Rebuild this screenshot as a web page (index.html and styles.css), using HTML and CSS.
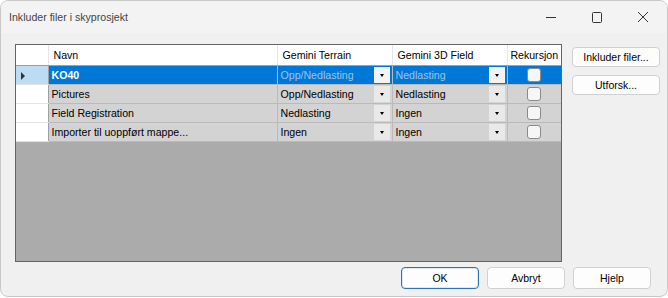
FILE: index.html
```html
<!DOCTYPE html>
<html lang="no">
<head>
    <meta charset="UTF-8">
    <title>Inkluder filer i skyprosjekt</title>
    <link rel="stylesheet" href="styles.css">
</head>
<body>
    <div class="window">
        <div class="titlebar">
            <div class="title">Inkluder filer i skyprosjekt</div>
            <div class="caption-buttons">
                <svg class="cap" width="46" height="32" viewBox="0 0 46 32"><path d="M18 16.5h10" stroke="#333" stroke-width="1"/></svg>
                <svg class="cap" width="46" height="32" viewBox="0 0 46 32"><rect x="18.5" y="11.5" width="9" height="10" rx="1" fill="none" stroke="#333" stroke-width="1"/></svg>
                <svg class="cap" width="46" height="32" viewBox="0 0 46 32"><path d="M18 11l10 10M28 11l-10 10" stroke="#333" stroke-width="1"/></svg>
            </div>
        </div>

        <div class="content">
            <div class="grid">
                <table class="rows">
                    <colgroup>
                        <col class="w-rh">
                        <col class="w-name">
                        <col class="w-combo">
                        <col class="w-combo">
                        <col class="w-rek">
                    </colgroup>
                    <tr class="head">
                        <td class="rh"></td>
                        <td>Navn</td>
                        <td>Gemini Terrain</td>
                        <td>Gemini 3D Field</td>
                        <td class="c-rek">Rekursjon</td>
                    </tr>
                    <tr class="selected">
                        <td class="rh"><span class="arrow"></span></td>
                        <td class="c-name"><b>KO40</b></td>
                        <td class="combo"><div class="cell"><span>Opp/Nedlasting</span><span class="drop"></span></div></td>
                        <td class="combo"><div class="cell"><span>Nedlasting</span><span class="drop"></span></div></td>
                        <td class="chk"><span class="box"></span></td>
                    </tr>
                    <tr>
                        <td class="rh"></td>
                        <td class="c-name">Pictures</td>
                        <td class="combo"><div class="cell"><span>Opp/Nedlasting</span><span class="drop"></span></div></td>
                        <td class="combo"><div class="cell"><span>Nedlasting</span><span class="drop"></span></div></td>
                        <td class="chk"><span class="box"></span></td>
                    </tr>
                    <tr>
                        <td class="rh"></td>
                        <td class="c-name">Field Registration</td>
                        <td class="combo"><div class="cell"><span>Nedlasting</span><span class="drop"></span></div></td>
                        <td class="combo"><div class="cell"><span>Ingen</span><span class="drop"></span></div></td>
                        <td class="chk"><span class="box"></span></td>
                    </tr>
                    <tr>
                        <td class="rh"></td>
                        <td class="c-name">Importer til uoppført mappe...</td>
                        <td class="combo"><div class="cell"><span>Ingen</span><span class="drop"></span></div></td>
                        <td class="combo"><div class="cell"><span>Ingen</span><span class="drop"></span></div></td>
                        <td class="chk"><span class="box"></span></td>
                    </tr>
                </table>
            </div>

            <div class="side">
                <button class="btn">Inkluder filer...</button>
                <button class="btn">Utforsk...</button>
            </div>
        </div>

        <div class="footer">
            <button class="btn wide default">OK</button>
            <button class="btn wide">Avbryt</button>
            <button class="btn wide">Hjelp</button>
        </div>
    </div>
</body>
</html>
```

FILE: styles.css
```css
body {
    margin: 0;
    background: #ffffff;
    font-family: "Liberation Sans", Arial, sans-serif;
    font-size: 12px;
    color: #000;
}
.window {
    width: 666px;
    height: 295px;
    border: 1px solid #c9c9c9;
    border-radius: 8px;
    background: #f0f0f0;
    display: flex;
    flex-direction: column;
    overflow: hidden;
}

.titlebar {
    height: 32px;
    display: flex;
    align-items: center;
    justify-content: space-between;
    background: #f3f3f3;
}
.title {
    padding-left: 8px;
    font-family: "Liberation Sans", Arial, sans-serif;
    font-size: 10.6px;
    color: #444;
}
.caption-buttons {
    display: flex;
    align-self: flex-start;
    margin-right: 1px;
}
.cap {
    display: block;
}

.content {
    display: flex;
    padding: 11px 0 0 14px;
    gap: 10px;
}

.grid {
    width: 545px;
    height: 216px;
    border: 1px solid #646464;
    background: #ababab;
}
.rows {
    border-collapse: collapse;
    table-layout: fixed;
    width: 545px;
    font-size: 10.6px;
}
.w-rh {
    width: 32px;
}
.w-name {
    width: 229px;
}
.w-combo {
    width: 115px;
}
.w-rek {
    width: 54px;
}
.rows td {
    box-sizing: border-box;
    height: 19px;
    padding: 0;
    white-space: nowrap;
    overflow: hidden;
    background: #d3d3d3;
    border-bottom: 1px solid #bababa;
    border-right: 1px solid #bababa;
}
.rows td.rh {
    background: #ffffff;
    border-right: 1px solid #a0a0a0;
    border-bottom: 1px solid #e3e3e3;
}
.rows .c-name {
    padding-left: 3px;
}
.rows .head td {
    height: 20px;
    background: #ffffff;
    border-right: 1px solid #e5e5e5;
    border-bottom: 1px solid #a0a0a0;
    padding-left: 5px;
}
.rows .head td.rh {
    padding-left: 0;
}
.rows .head td.c-rek {
    padding-left: 0;
    text-align: center;
    border-right: none;
}

.combo .cell {
    display: flex;
    align-items: center;
    justify-content: space-between;
    padding-left: 3px;
    padding-right: 2px;
}
.drop {
    width: 16px;
    height: 16px;
    background: #e9e9e9;
    position: relative;
}
.drop::after {
    content: "";
    position: absolute;
    left: 6px;
    top: 7px;
    border-left: 2px solid transparent;
    border-right: 2px solid transparent;
    border-top: 3px solid #000;
}

.rows td.chk {
    text-align: center;
    border-right: none;
}
.box {
    display: inline-block;
    width: 12px;
    height: 12px;
    border: 1px solid #8a8a8a;
    border-radius: 3px;
    background: #f6f6f6;
    vertical-align: middle;
}

.selected td {
    background: #0078d7;
    color: #ffffff;
}
.rows .selected td.rh {
    background: #bcdcf4;
}
.selected .combo {
    color: #9fc3e7;
}
.selected .drop {
    background: #f3f3f3;
}
.arrow {
    display: inline-block;
    margin-left: 5px;
    border-top: 4px solid transparent;
    border-bottom: 4px solid transparent;
    border-left: 4px solid #333;
    vertical-align: middle;
}

.side {
    display: flex;
    flex-direction: column;
    gap: 8px;
    padding-top: 3px;
}
.btn {
    font-family: "Liberation Sans", Arial, sans-serif;
    font-size: 10.5px;
    color: #000;
    background: #fdfdfd;
    border: 1px solid #d0d0d0;
    border-radius: 4px;
    width: 88px;
    height: 20px;
    padding: 0;
}

.footer {
    display: flex;
    justify-content: flex-end;
    gap: 8px;
    padding: 5px 16px 0 0;
}
.btn.wide {
    width: 78px;
    height: 22px;
}
.btn.default {
    border: 1px solid #2e72b8;
    box-shadow: inset 0 0 0 1px #dce8f5;
}
```
